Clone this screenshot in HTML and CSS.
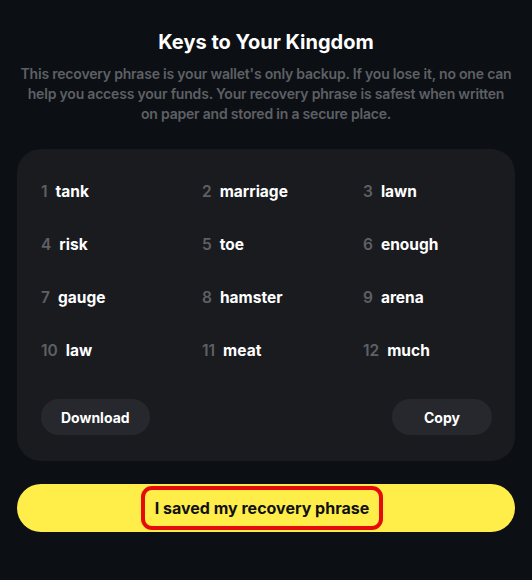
FILE: index.html
```html
<!DOCTYPE html>
<html lang="en">
<head>
<meta charset="utf-8">
<title>Keys to Your Kingdom</title>
<link rel="stylesheet" href="styles.css">
</head>
<body>
<main class="page">
  <h1 class="title">Keys to Your Kingdom</h1>
  <p class="intro">This recovery phrase is your wallet's only backup. If you lose it, no one can help you access your funds. Your recovery phrase is safest when written on paper and stored in a secure place.</p>
  <section class="card">
    <ol class="words">
      <li><span class="num">1</span><span class="word">tank</span></li>
      <li><span class="num">2</span><span class="word">marriage</span></li>
      <li><span class="num">3</span><span class="word">lawn</span></li>
      <li><span class="num">4</span><span class="word">risk</span></li>
      <li><span class="num">5</span><span class="word">toe</span></li>
      <li><span class="num">6</span><span class="word">enough</span></li>
      <li><span class="num">7</span><span class="word">gauge</span></li>
      <li><span class="num">8</span><span class="word">hamster</span></li>
      <li><span class="num">9</span><span class="word">arena</span></li>
      <li><span class="num">10</span><span class="word">law</span></li>
      <li><span class="num">11</span><span class="word">meat</span></li>
      <li><span class="num">12</span><span class="word">much</span></li>
    </ol>
    <div class="actions">
      <button class="btn btn-download">Download</button>
      <button class="btn btn-copy">Copy</button>
    </div>
  </section>
  <button class="confirm"><span class="confirm-label">I saved my recovery phrase</span></button>
</main>
</body>
</html>
```
FILE: styles.css
```css
* { box-sizing: border-box; }
html, body {
  margin: 0;
  padding: 0;
  background: #0c0f14;
}
body {
  font-family: Inter, "Noto Sans", "Liberation Sans", sans-serif;
  color: #fff;
}
.page {
  padding: 28px 17px 0;
  display: flex;
  flex-direction: column;
}
.title {
  margin: 0;
  font-size: 20px;
  line-height: 28px;
  font-weight: 700;
  text-align: center;
  color: #fff;
}
.intro {
  margin: 8px 3px 0;
  font-size: 14px;
  line-height: 20px;
  font-weight: 600;
  letter-spacing: -0.2px;
  text-align: center;
  color: #5e6064;
}
.card {
  margin-top: 25px;
  background: #1a1b1f;
  border-radius: 24px;
  padding: 32px 23px 26px 24px;
}
.words {
  list-style: none;
  margin: 0;
  padding: 0;
  display: grid;
  grid-template-columns: 161px 161px 1fr;
  row-gap: 33px;
}
.words li {
  display: flex;
  align-items: center;
  gap: 8px;
  height: 20px;
  font-size: 15.5px;
  font-weight: 700;
}
.num {
  color: #5e6064;
  font-weight: 600;
}
.word { color: #fff; }
.actions {
  display: flex;
  justify-content: space-between;
  margin-top: 39px;
}
.btn {
  height: 36px;
  border: none;
  border-radius: 18px;
  background: #27282d;
  color: #fff;
  font-family: inherit;
  font-size: 14px;
  font-weight: 700;
  padding: 0 20px;
}
.btn-copy { width: 100px; }
.confirm {
  margin-top: 23px;
  height: 48px;
  border: none;
  border-radius: 24px;
  background: #ffee4a;
  display: flex;
  align-items: center;
  justify-content: center;
  font-family: inherit;
  font-size: 16px;
  font-weight: 700;
  color: #111;
  padding: 0 8px 0 0;
}
.confirm-label {
  border: 4px solid #e60b0b;
  border-radius: 11px;
  padding: 8px 10px;
  line-height: 20px;
}
```
